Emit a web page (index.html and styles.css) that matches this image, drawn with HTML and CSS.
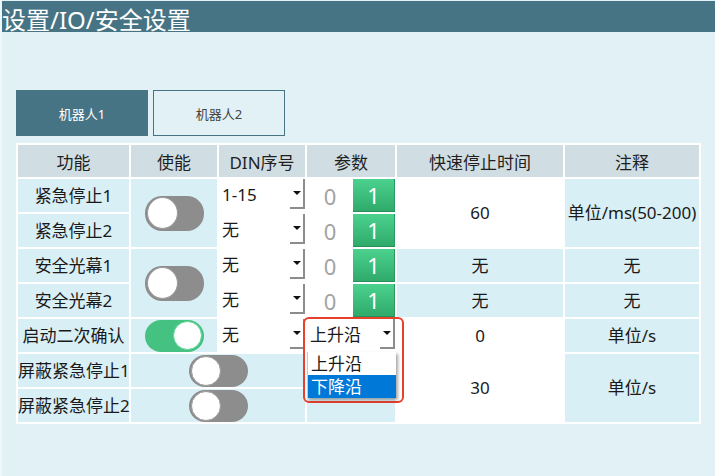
FILE: index.html
```html
<!DOCTYPE html>
<html lang="zh-CN">
<head>
    <meta charset="UTF-8">
    <title>安全设置</title>
    <link rel="stylesheet" href="styles.css">
</head>
<body>
    <div class="page">
        <div class="title-bar">设置/IO/安全设置</div>

        <div class="content">
            <div class="tabs">
                <div class="tab active">机器人1</div>
                <div class="tab">机器人2</div>
            </div>

            <div class="table-wrap">
                <table class="io-table">
                    <colgroup>
                        <col class="c-func">
                        <col class="c-enable">
                        <col class="c-din">
                        <col class="c-param">
                        <col class="c-time">
                        <col class="c-note">
                    </colgroup>
                    <thead>
                        <tr>
                            <th>功能</th>
                            <th>使能</th>
                            <th>DIN序号</th>
                            <th>参数</th>
                            <th>快速停止时间</th>
                            <th>注释</th>
                        </tr>
                    </thead>
                    <tbody>
                        <tr>
                            <td class="blue">紧急停止1</td>
                            <td class="blue" rowspan="2">
                                <div class="toggle tall"><span class="knob"></span></div>
                            </td>
                            <td class="white">
                                <div class="select"><span class="select-text">1-15</span><span class="arrow"></span></div>
                            </td>
                            <td class="white">
                                <div class="param"><span class="zero">0</span><span class="one">1</span></div>
                            </td>
                            <td class="white" rowspan="2">60</td>
                            <td class="blue" rowspan="2">单位/ms(50-200)</td>
                        </tr>
                        <tr>
                            <td class="blue">紧急停止2</td>
                            <td class="white">
                                <div class="select"><span class="select-text">无</span><span class="arrow"></span></div>
                            </td>
                            <td class="white">
                                <div class="param"><span class="zero">0</span><span class="one">1</span></div>
                            </td>
                        </tr>
                        <tr>
                            <td class="blue">安全光幕1</td>
                            <td class="blue" rowspan="2">
                                <div class="toggle tall"><span class="knob"></span></div>
                            </td>
                            <td class="white">
                                <div class="select"><span class="select-text">无</span><span class="arrow"></span></div>
                            </td>
                            <td class="white">
                                <div class="param"><span class="zero">0</span><span class="one">1</span></div>
                            </td>
                            <td class="blue">无</td>
                            <td class="blue">无</td>
                        </tr>
                        <tr>
                            <td class="blue">安全光幕2</td>
                            <td class="white">
                                <div class="select"><span class="select-text">无</span><span class="arrow"></span></div>
                            </td>
                            <td class="white">
                                <div class="param"><span class="zero">0</span><span class="one">1</span></div>
                            </td>
                            <td class="blue">无</td>
                            <td class="blue">无</td>
                        </tr>
                        <tr>
                            <td class="blue">启动二次确认</td>
                            <td class="blue">
                                <div class="toggle on"><span class="knob"></span></div>
                            </td>
                            <td class="white">
                                <div class="select"><span class="select-text">无</span><span class="arrow"></span></div>
                            </td>
                            <td class="white">
                                <div class="select"><span class="select-text">上升沿</span><span class="arrow"></span></div>
                            </td>
                            <td class="white">0</td>
                            <td class="blue">单位/s</td>
                        </tr>
                        <tr>
                            <td class="blue">屏蔽紧急停止1</td>
                            <td class="blue" colspan="2">
                                <div class="toggle"><span class="knob"></span></div>
                            </td>
                            <td class="blue" rowspan="2"></td>
                            <td class="white" rowspan="2">30</td>
                            <td class="blue" rowspan="2">单位/s</td>
                        </tr>
                        <tr>
                            <td class="blue">屏蔽紧急停止2</td>
                            <td class="blue" colspan="2">
                                <div class="toggle"><span class="knob"></span></div>
                            </td>
                        </tr>
                    </tbody>
                </table>

                <!-- open dropdown of the 启动二次确认 edge select, with annotation frame -->
                <div class="highlight"></div>
                <ul class="dropdown">
                    <li>上升沿</li>
                    <li class="selected">下降沿</li>
                </ul>
            </div>
        </div>
    </div>
</body>
</html>
```

FILE: styles.css
```css
* {
    margin: 0;
    padding: 0;
    box-sizing: border-box;
}

body {
    font-family: 'Noto Sans', 'Noto Sans CJK SC', sans-serif;
    background: #e2f1f6;
    color: #1a1a1a;
    width: 715px;
    height: 476px;
    overflow: hidden;
}

.page {
    height: 476px;
    padding-top: 1px;
    border-left: 2px solid #edf6f9;
}

.title-bar {
    height: 31px;
    padding-top: 7px;
    background: #467484;
    color: #ffffff;
    font-size: 24px;
    line-height: 24px;
    white-space: nowrap;
}

.content {
    padding: 58px 0 0 14px;
}

.tabs {
    display: flex;
    gap: 5px;
}

.tab {
    width: 132px;
    height: 46px;
    display: flex;
    align-items: center;
    justify-content: center;
    font-size: 13px;
    color: #444;
    border: 1px solid #467484;
}

.tab.active {
    background: #467484;
    color: #ffffff;
}

.table-wrap {
    position: relative;
    margin-top: 7px;
    width: 685px;
}

.io-table {
    width: 685px;
    table-layout: fixed;
    border-collapse: separate;
    border-spacing: 2px;
    background: #ffffff;
    font-size: 17px;
}

.c-func { width: 111px; }
.c-enable { width: 86px; }
.c-din { width: 86px; }
.c-param { width: 88px; }
.c-time { width: 166px; }
.c-note { width: 134px; }

.io-table th {
    height: 32px;
    padding: 0;
    background: #d0dee3;
    font-weight: 400;
    color: #1f1f1f;
    text-align: center;
    white-space: nowrap;
}

.io-table td {
    height: 33px;
    padding: 0;
    text-align: center;
    vertical-align: middle;
    white-space: nowrap;
    line-height: 20px;
}

.io-table td.blue {
    background: #d9eff6;
}

.io-table td.white {
    background: #ffffff;
}

/* select boxes */
.select {
    display: flex;
    align-items: center;
    height: 30px;
    margin-bottom: 3px;
}

.select-text {
    flex: 1;
    padding: 2px 0 0 3px;
    text-align: left;
}

.arrow {
    width: 15px;
    height: 30px;
    border-right: 2px solid #8c8c8c;
    border-bottom: 2px solid #8c8c8c;
    display: flex;
    align-items: center;
    justify-content: center;
}

.arrow::before {
    content: '';
    border-top: 4px solid #111;
    border-left: 4px solid transparent;
    border-right: 4px solid transparent;
    margin-left: 1px;
}

/* 0 / 1 switch */
.param {
    display: flex;
    height: 33px;
}

.zero {
    width: 46px;
    display: flex;
    align-items: center;
    justify-content: center;
    font-size: 22px;
    color: #a2a2a2;
}

.one {
    flex: 1;
    display: flex;
    align-items: center;
    justify-content: center;
    font-size: 22px;
    color: #ffffff;
    background: linear-gradient(#4cd28e, #2faa6a);
    border-bottom: 1px solid #279058;
    border-right: 1px solid #2b9a60;
}

/* toggles */
.toggle {
    width: 59px;
    height: 32px;
    margin: 0 auto;
    padding: 1px 2px;
    border-radius: 17px;
    background: #8d8d8d;
    display: flex;
    align-items: center;
}

.toggle.tall {
    height: 35px;
}

.toggle .knob {
    width: 30px;
    height: 30px;
    border-radius: 50%;
    background: #ffffff;
    border: 1px solid #9a9a9a;
}

.toggle.tall .knob {
    width: 31px;
    height: 32px;
}

.toggle.on {
    background: #45c282;
    justify-content: flex-end;
}

.toggle.on .knob {
    width: 29px;
    height: 29px;
    border-color: #5fd497;
}

/* open dropdown overlay */
.highlight {
    position: absolute;
    left: 287px;
    top: 174px;
    width: 101px;
    height: 86px;
    border: 2px solid #e5412c;
    border-radius: 6px;
}

.dropdown {
    position: absolute;
    left: 291px;
    top: 209px;
    width: 89px;
    list-style: none;
    background: #ffffff;
    border-left: 1px solid #c9c9c9;
    box-shadow: 2px 2px 3px rgba(0, 0, 0, 0.35);
    font-size: 17px;
}

.dropdown li {
    height: 23px;
    line-height: 23px;
    padding-left: 3px;
}

.dropdown li.selected {
    background: #0078d7;
    color: #ffffff;
}
```
